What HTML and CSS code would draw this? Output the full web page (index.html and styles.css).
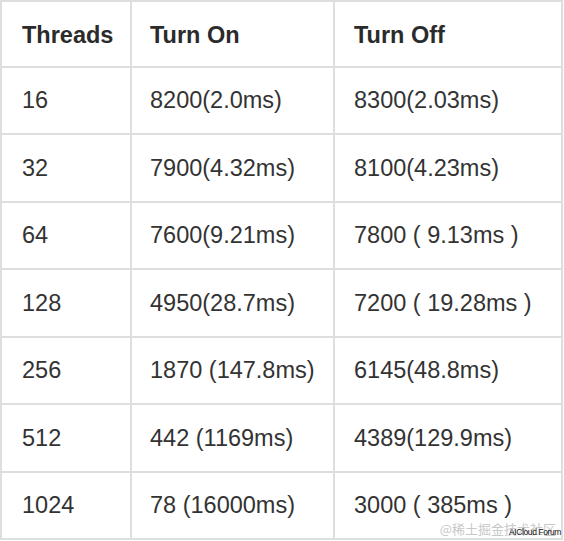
FILE: index.html
```html
<!DOCTYPE html>
<html>
<head>
<meta charset="utf-8">
<link rel="stylesheet" href="styles.css">
</head>
<body>
<div class="wrap">
<table class="perf">
<thead>
<tr><th class="c1">Threads</th><th class="c2">Turn On</th><th class="c3">Turn Off</th></tr>
</thead>
<tbody>
<tr><td>16</td><td>8200(2.0ms)</td><td>8300(2.03ms)</td></tr>
<tr><td>32</td><td>7900(4.32ms)</td><td>8100(4.23ms)</td></tr>
<tr><td>64</td><td>7600(9.21ms)</td><td>7800 ( 9.13ms )</td></tr>
<tr><td>128</td><td>4950(28.7ms)</td><td>7200 ( 19.28ms )</td></tr>
<tr><td>256</td><td>1870 (147.8ms)</td><td>6145(48.8ms)</td></tr>
<tr><td>512</td><td>442 (1169ms)</td><td>4389(129.9ms)</td></tr>
<tr><td>1024</td><td>78 (16000ms)</td><td>3000 ( 385ms )</td></tr>
</tbody>
</table>
<div class="wm">@稀土掘金技术社区</div>
<div class="wm2">AICloud Forum</div>
</div>
</body>
</html>
```
FILE: styles.css
```css
html, body {
  margin: 0;
  padding: 0;
  background: #fff;
}
.wrap {
  position: relative;
  width: 564px;
  height: 541px;
  overflow: hidden;
}
.perf {
  border-collapse: collapse;
  width: 563px;
  font-family: "Liberation Sans", Arial, "Noto Sans CJK SC", sans-serif;
  font-size: 23.5px;
  color: #333;
  table-layout: fixed;
}
.perf th, .perf td {
  border: 2px solid #dedede;
  height: 64.5px;
  padding: 1px 0 0 18px;
  text-align: left;
  vertical-align: middle;
  white-space: nowrap;
}
.perf th {
  height: 60.5px;
  padding-top: 3px;
  font-weight: bold;
  color: #2b2b2b;
}
.perf td {
  font-weight: normal;
}
.c1 { width: 108px; }
.c2 { width: 183px; }
.perf th.c1, .perf td:first-child { padding-left: 20px; }
.perf th.c3, .perf td:last-child { padding-left: 19px; }
.wm {
  position: absolute;
  right: 8px;
  bottom: 3px;
  font-family: "Noto Sans CJK SC", sans-serif;
  font-size: 13px;
  color: #c8c8c8;
}
.wm2 {
  position: absolute;
  right: 3px;
  bottom: 4px;
  font-family: "Liberation Sans", Arial, sans-serif;
  font-size: 8.5px;
  color: #111;
  letter-spacing: -0.4px;
}
```
